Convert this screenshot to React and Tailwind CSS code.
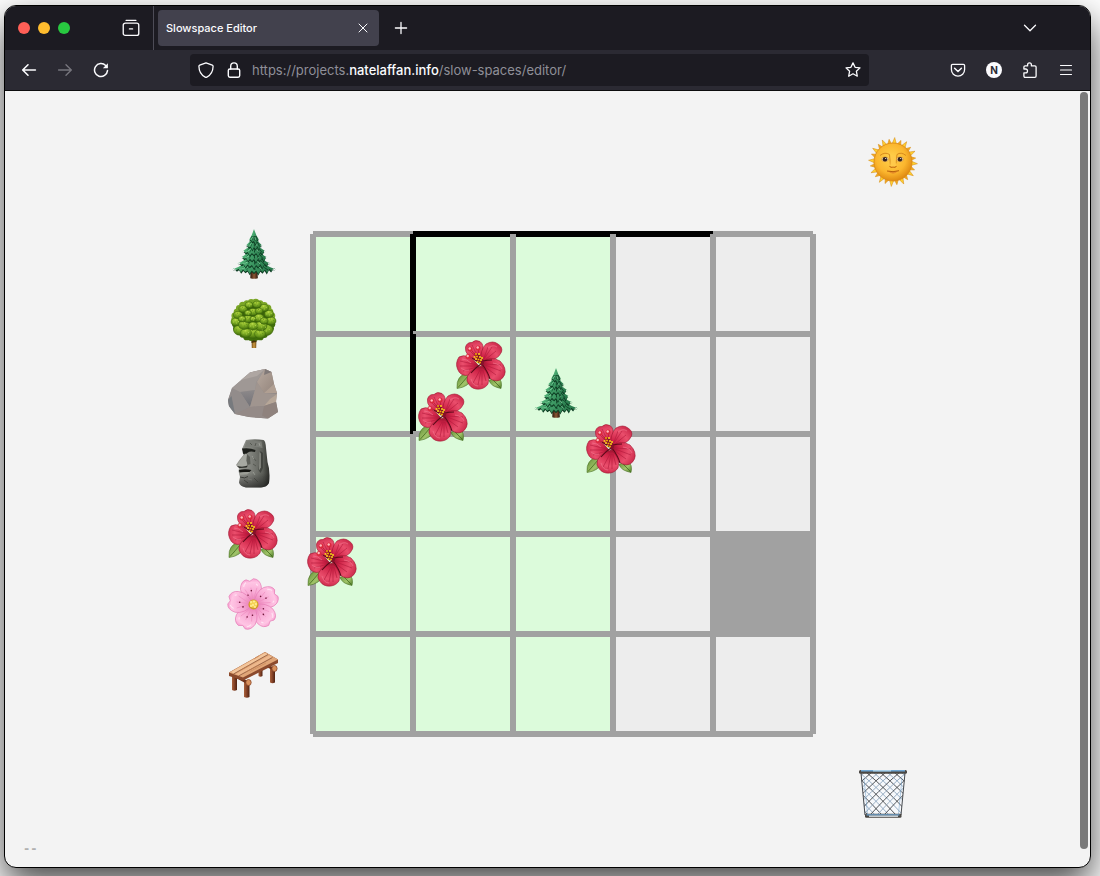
import React from "react";

/* ---------- browser icons ---------- */

function Icon({ size = 16, stroke = 1.4, children, className = "" }) {
  return (
    <svg
      width={size}
      height={size}
      viewBox="0 0 16 16"
      fill="none"
      stroke="currentColor"
      strokeWidth={stroke}
      strokeLinecap="round"
      strokeLinejoin="round"
      className={"shrink-0 " + className}
      aria-hidden="true"
    >
      {children}
    </svg>
  );
}

const FirefoxViewIcon = () => (
  <Icon size={18} stroke={1.2}>
    <path d="M3.6 1.200h8.800" />
    <path d="M3 3.600h10c1.100 0 1.900.8 1.900 1.800v7.400c0 1-.8 1.800-1.800 1.800H2.900c-1 0-1.800-.8-1.800-1.800V5.400c0-1 .8-1.800 1.900-1.800z" />
    <path d="M6.600 8.800h2.800" />
  </Icon>
);
const CloseIcon = () => (
  <Icon size={16} stroke={1}>
    <path d="M4 4l8 8M12 4l-8 8" />
  </Icon>
);
const PlusIcon = () => (
  <Icon size={16} stroke={1.3}>
    <path d="M8 2.4v11.2M2.4 8h11.2" />
  </Icon>
);
const ChevronIcon = () => (
  <Icon size={16} stroke={1.3}>
    <path d="M2.5 5.2 8 10.7l5.500-5.500" />
  </Icon>
);
const BackIcon = () => (
  <Icon stroke={1.6}>
    <path d="M14.400 8H1.800M7 2.800 1.700 8 7 13.200" />
  </Icon>
);
const ForwardIcon = () => (
  <Icon stroke={1.4}>
    <path d="M1.600 8h12.600M9 2.800 14.300 8 9 13.200" />
  </Icon>
);
const ReloadIcon = () => (
  <Icon stroke={1.5}>
    <path d="M14.500 8.600A6.500 6.500 0 1 1 12.700 3.500l1 1.100" />
    <path d="M14.900 1.300v5h-5z" fill="currentColor" stroke="none" />
  </Icon>
);
const ShieldIcon = () => (
  <Icon stroke={1.3}>
    <path d="M8 .800 1.700 3.100c-.500.200-.800.600-.800 1.100.100 5 2.300 8.800 6.300 10.900.500.300 1.100.300 1.600 0 4-2.100 6.200-5.900 6.300-10.900 0-.500-.300-.900-.800-1.100z" />
  </Icon>
);
const LockIcon = () => (
  <Icon stroke={1.4}>
    <rect x="2.300" y="7" width="11.400" height="8.200" rx="1.600" />
    <path d="M4.700 7V4.200a3.300 3.300 0 0 1 6.600 0V7" />
  </Icon>
);
const StarIcon = () => (
  <Icon stroke={1.3}>
    <path d="M8 .900 10.100 5.300l4.900.600-3.600 3.400.900 4.900L8 11.800l-4.300 2.400.9-4.900L1 5.900l4.900-.600z" />
  </Icon>
);
const PocketIcon = () => (
  <Icon stroke={1.3}>
    <path d="M2.600 2.300h10.800c.700 0 1.200.500 1.200 1.200V7.500a6.600 6.600 0 0 1-13.200 0V3.500c0-.700.500-1.200 1.200-1.200z" />
    <path d="M4.600 6.300 8 9.500l3.400-3.200" strokeWidth="1.500" />
  </Icon>
);
const PuzzleIcon = () => (
  <Icon stroke={1.300}>
    <path d="M5.600 3.900V2.700a1.900 1.900 0 0 1 3.800 0v1.200h3.500c.700 0 1.200.500 1.200 1.200v9c0 .700-.500 1.200-1.200 1.200H3.100c-.700 0-1.200-.500-1.200-1.200v-3.300h1.700a1.900 1.900 0 0 0 0-3.800H1.900V5.100c0-.700.500-1.200 1.200-1.200z" />
  </Icon>
);
const MenuIcon = () => (
  <Icon stroke={1.200}>
    <path d="M2.500 3.500h11M2.500 8h11M2.500 12.500h11" />
  </Icon>
);

/* ---------- garden objects, each on a 50 x 50 field ---------- */

function Glyph({ children }) {
  return (
    <svg width="50" height="50" viewBox="0 0 50 50" className="block overflow-visible" aria-hidden="true">
      {children}
    </svg>
  );
}

const pineTiers = [
  { top: 26, base: 40.500, half: 22, teeth: 10 },
  { top: 22, base: 35, half: 17, teeth: 8 },
  { top: 17, base: 29, half: 14, teeth: 7 },
  { top: 12, base: 23, half: 12.500, teeth: 6 },
  { top: 6, base: 17, half: 8.500, teeth: 5 },
  { top: 0, base: 11, half: 5, teeth: 3 },
];

function tierPath({ top, base, half, teeth }, dy, shrink) {
  const cx = 26;
  const h = half * shrink;
  const step = (2 * h) / teeth;
  let d = `M${cx} ${top + dy}Q${cx - h * 0.35} ${base - 5 + dy} ${cx - h} ${base + dy}`;
  for (let i = 0; i < teeth; i++) {
    const x = cx - h + i * step;
    const sag = 3 * Math.sin(((i + 0.5) / teeth) * Math.PI);
    const tip = i === teeth - 1 ? 0 : sag + (i % 2 ? 1.5 : 0.2);
    d += `L${x + step * 0.5} ${base - 2 + sag + dy}L${x + step} ${base + tip + dy}`;
  }
  return d + `Q${cx + h * 0.35} ${base - 5 + dy} ${cx} ${top + dy}Z`;
}

function Pine() {
  return (
    <Glyph>
      <defs>
        <linearGradient id="pineLeaf" x1="0" y1="0" x2="1" y2="0.6">
          <stop offset="0" stopColor="#6ccb8e" />
          <stop offset="0.5" stopColor="#46a56d" />
          <stop offset="1" stopColor="#27784a" />
        </linearGradient>
        <linearGradient id="pineTrunk">
          <stop offset="0" stopColor="#2c170c" />
          <stop offset="0.5" stopColor="#8d5836" />
          <stop offset="1" stopColor="#2c170c" />
        </linearGradient>
      </defs>
      <path d="M22.500 41h7l.3 8.200q-3.700 1-7.500 0z" fill="url(#pineTrunk)" />
      {pineTiers.map((t, i) => (
        <g key={i}>
          <path d={tierPath(t, 1.500, 0.97)} fill="#0d3b22" />
          <path d={tierPath(t, 0, 1)} fill="url(#pineLeaf)" />
          {[-0.75, -0.4, 0.05, 0.4, 0.75].map((k) => (
            <path
              key={k}
              d={`M${26 + k * t.half * 0.5} ${t.base - 4}q${k * 2} 2 ${k * t.half * 0.35} 4.500`}
              stroke={k > 0 ? "#11472a" : "#1d6a40"}
              strokeWidth="1"
              fill="none"
            />
          ))}
          <path
            d={`M${26 - t.half * 0.25} ${t.base - 3}l${-t.half * 0.4} 3M${26 + t.half * 0.2} ${t.base - 3}l${t.half * 0.15} 3`}
            stroke="#8be0a8"
            strokeWidth="0.7"
          />
        </g>
      ))}
    </Glyph>
  );
}

const treeRim = Array.from({ length: 26 }, (_, i) => {
  const a = (i / 26) * Math.PI * 2;
  return [25.5 + 19 * Math.cos(a), 21 + 17.800 * Math.sin(a), 3 + (i % 3) * 0.3];
});
const treeClumps = [
  [12, 31, 6.500], [38, 31, 7], [25, 34, 6.500], [18, 34, 5.500], [32, 35, 5.500],
  [8, 23, 5], [43, 22, 5], [33, 27, 6], [16, 26, 5.500], [25, 27, 5],
  [10, 16, 4.500], [41, 15, 4.500], [20, 20, 4.500], [31, 19, 5], [36, 22, 4], [14, 20, 3.800],
  [15, 10, 4.200], [36, 9, 4.500], [25, 13, 4.500], [20, 14, 3.500], [31, 12, 3.800],
  [21, 6, 4], [29, 5.500, 4.200], [25, 20, 3.200],
];

function RoundTree() {
  return (
    <Glyph>
      <defs>
        <radialGradient id="clump" cx="0.45" cy="0.2" r="0.85">
          <stop offset="0" stopColor="#b3d63f" />
          <stop offset="0.5" stopColor="#79a822" />
          <stop offset="1" stopColor="#3a6508" />
        </radialGradient>
        <linearGradient id="roundTrunk">
          <stop offset="0" stopColor="#6e4a14" />
          <stop offset="0.5" stopColor="#cf9b45" />
          <stop offset="1" stopColor="#6e4a14" />
        </linearGradient>
      </defs>
      <path d="M23.500 38h5l-.3 11h-4.400z" fill="url(#roundTrunk)" />
      <path d="M23.500 40h5v3l-5 1z" fill="#443208" />
      <ellipse cx="25.500" cy="21.500" rx="20" ry="18.500" fill="#3a6209" />
      {treeRim.map(([x, y, r], i) => (
        <circle key={i} cx={x} cy={y} r={r} fill={y > 24 ? "#416e0c" : "#7aa526"} />
      ))}
      {treeClumps.map(([x, y, r], i) => (
        <ellipse key={i} cx={x} cy={y} rx={r} ry={r * 0.8} fill="url(#clump)" stroke="#3b650a" strokeWidth="0.500" />
      ))}
      {treeClumps.map(([x, y, r], i) => (
        <path
          key={i}
          d={`M${x - r * 0.6} ${y}h.9M${x - 1} ${y - r * 0.4}h1M${x + r * 0.4} ${y - 0.5}h.9M${x} ${y + 1}h.8`}
          stroke={i % 2 ? "#c5e060" : "#57841a"}
          strokeWidth="0.7"
        />
      ))}
    </Glyph>
  );
}

function Rock() {
  return (
    <Glyph>
      <defs>
        <linearGradient id="rockBase" x1="0" y1="0" x2="0.6" y2="1">
          <stop offset="0" stopColor="#a7a09d" />
          <stop offset="1" stopColor="#8b8380" />
        </linearGradient>
        <linearGradient id="rockRight" x1="0" y1="0" x2="1" y2="1">
          <stop offset="0" stopColor="#b8aaa0" />
          <stop offset="1" stopColor="#94857c" />
        </linearGradient>
        <linearGradient id="rockDark" x1="0" y1="0" x2="0" y2="1">
          <stop offset="0" stopColor="#8d898a" />
          <stop offset="1" stopColor="#717177" />
        </linearGradient>
      </defs>
      <path d="M0 31 4 19 22 3.500 37 0l6.500 3 2.500 12 3 9-1 8 2 11-10 6.500-19-1.500-14-3L1 37z" fill="url(#rockBase)" />
      <path d="M22 3.500 37 0l-9 13-1 8-15 2-8-4z" fill="#9f9895" />
      <path d="M22 3.500 37 0l-8 7-16 4z" fill="#aea6a2" />
      <path d="M37 0l6.500 3L46 15l-10 9-7-11z" fill="url(#rockRight)" />
      <path d="M37 0l6.500 3-7.500 3z" fill="#807978" />
      <path d="M12 23l15-2-5 17z" fill="url(#rockDark)" />
      <path d="M27 21l2-8 7 11 13 1-7 6-6 6-14 1z" fill="#a0958f" />
      <path d="M36 24l10-9 3 9z" fill="#b09f92" />
      <path d="M49 25l-1 8-12 4 6-7z" fill="#b7a798" />
      <path d="M36 37l12-4 2 10-10 6.500-6-3z" fill="#8f827d" />
      <path d="M22 38l14-1-2 9.500 6 3L21 48l-14-3z" fill="#948a87" />
      <path d="M0 31 4 19l8 4 10 15-15 7-6-8z" fill="#928c8b" />
      <path d="M0 31l3.500-4L7 45l-6-8z" fill="#777a7e" />
    </Glyph>
  );
}

const moaiOutline =
  "M18 1q9-1.500 17.500 0 2 .5 2.500 8l1.500 14q3 9 1.500 21-2 4-8 4.500H18q-6-1-7-5l1-5.500-1-4-.5-2 .5-2.500-3-3.500q3-5 7.500-10l.5-2.500-2-3.500z";

function Moai() {
  return (
    <Glyph>
      <defs>
        <linearGradient id="moai">
          <stop offset="0" stopColor="#9b9c96" />
          <stop offset="0.450" stopColor="#7f817b" />
          <stop offset="0.8" stopColor="#5b5d57" />
          <stop offset="1" stopColor="#2d2e2a" />
        </linearGradient>
        <linearGradient id="moaiShade" x1="0" y1="0" x2="0" y2="1">
          <stop offset="0.700" stopColor="#111" stopOpacity="0" />
          <stop offset="1" stopColor="#111" stopOpacity="0.6" />
        </linearGradient>
      </defs>
      <path d={moaiOutline} fill="url(#moai)" />
      <path d="M14 9.500q8-1 13.500 1.500l-.5 2q-5-1-7 .5l-3.500 2.500-1.500-1.500z" fill="#1d1f1b" />
      <path d="M17 14.500l2 1-.5 6 1 4.500q-3 2.500-10.500.5 3-5 8-12z" fill="#a6a8a1" />
      <path d="M19 15l3 3 .5 7-3 1-1-4.500z" fill="#5c5e58" />
      <path d="M9 27q6 1.500 11-.5l-1.500 2-7 .5z" fill="#282a26" />
      <path d="M11 31q6-1.500 12.500 0l-2 2-10 .5z" fill="#141512" />
      <path d="M11 34q6-1.500 11-1l-3 2.500-7 .5z" fill="#9fa19a" />
      <path d="M12 38q5 2 8-.5" stroke="#464843" fill="none" />
      <path d="M32.500 12l2.500 2v15l-2.500 5-2-3z" fill="#42443f" />
      <path d="M31.500 13l1.300 1.500v14l-1.800 3z" fill="#8c8e87" />
      <path d="M18.500 2.500q8-1 15 0l1 6.500q-9-2-18-.5z" fill="#7b7d77" />
      <path d="M22 4l2 2M28 4l-1 3M25 18l3 4M25 25l3 2M16 41l4 3M26 39l4 4M35 37l2 5" stroke="#54564f" strokeWidth="0.900" />
      <path d="M24 17l2 3M25 33l2 3M20 40l4 1M31 4l1 3" stroke="#a1a39c" strokeWidth="0.800" />
      <path d={moaiOutline} fill="url(#moaiShade)" />
    </Glyph>
  );
}

const pistil = [
  [20, 14], [23, 14], [18.500, 17], [21, 16.500], [24, 17], [20, 19], [22.500, 19.500], [25, 20],
  [21.500, 22], [24, 22.500], [26, 18],
];

function Hibiscus() {
  return (
    <Glyph>
      <defs>
        <radialGradient id="hibPetal" gradientUnits="userSpaceOnUse" cx="25" cy="24" r="26">
          <stop offset="0" stopColor="#8c0c28" />
          <stop offset="0.3" stopColor="#cf2347" />
          <stop offset="0.7" stopColor="#ea4e6c" />
          <stop offset="1" stopColor="#cc2a4b" />
        </radialGradient>
        <linearGradient id="hibLeaf" x1="0" y1="0" x2="1" y2="1">
          <stop offset="0" stopColor="#5d8c31" />
          <stop offset="0.6" stopColor="#a1c46a" />
          <stop offset="1" stopColor="#4c7a25" />
        </linearGradient>
      </defs>
      <path d="M1 48.500Q0 35 12 33l4 5q-3 9-15 10.500z" fill="url(#hibLeaf)" stroke="#476f22" strokeWidth="0.600" />
      <path d="M2 47.500Q7 42 12 36" stroke="#42691e" strokeWidth="0.800" fill="none" />
      <path d="M45 48.500q2-8-4-12l-8 4q2 6 12 8z" fill="url(#hibLeaf)" stroke="#476f22" strokeWidth="0.600" />
      <path d="M44.500 47.500 37 40" stroke="#42691e" strokeWidth="0.800" />
      <g fill="url(#hibPetal)" stroke="#a0142f" strokeWidth="0.600">
        <path d="M24 23Q8 16 9.500 7 11 2 16 2.500 19-1 24 1.500q4 3 3 9z" />
        <path d="M25 21Q24 10 30 4q7-4 12 0 5 3 3.500 8Q42 20 31 21z" />
        <path d="M23 26Q12 12 3 17-1 23 1.500 29q3 8 11.500 6z" />
        <path d="M25 23Q34 15 44 21q7 7 4.500 14-4 8-12 5Q27 36 25 23z" />
        <path d="M25 26Q10 31 11 41q3 7 9 8 8 1 12-5 3-10-7-18z" />
      </g>
      <g stroke="#b0193a" strokeWidth="0.600" fill="none">
        <path d="M21 25 4 21M21 26 4 26M21 27 7 31M28 19 36 7M29 20l11-9M28 18l4-11M29 24l16 1M29 25l16 6M29 27l11 8M24 30l-7 13M25 30l-3 15M26 30v15M27 30l3 11M19 16l-6-6M20 13 16 5" />
      </g>
      <g stroke="#f27991" strokeWidth="0.600" fill="none">
        <path d="M6 19q5 0 9 4M32 8q5-4 9-1M37 23q7 1 9 6M15 39q2 7 7 7M5 28q4 4 8 2" />
      </g>
      <path d="M25 24Q20 27 15 33M26 24q6 8 8 15M27 21q4-1 9-1M23 23q-4-4-7-5" stroke="#5c0a1a" strokeWidth="1.100" fill="none" />
      <path d="M26 26Q20 20 18 13l5 1q4 5 5 9z" fill="#84102a" />
      <path d="M20 16 14.500 9M22.500 14V8.500M19 18l-6-1" stroke="#c21f3f" strokeWidth="1" />
      {pistil.map(([x, y], i) => (
        <rect key={i} x={x - 0.9} y={y - 0.8} width="1.800" height="1.600" fill={i % 3 ? "#ffe11a" : "#f4b400"} />
      ))}
      {[[14, 9], [22, 8], [12, 16.500]].map(([x, y]) => (
        <g key={x}>
          <circle cx={x} cy={y} r="2.500" fill="#d92a3d" />
          <circle cx={x - 0.3} cy={y - 0.5} r="1.200" fill="#ffb9bd" />
        </g>
      ))}
    </Glyph>
  );
}

function Blossom() {
  return (
    <Glyph>
      <defs>
        <radialGradient id="blossom" gradientUnits="userSpaceOnUse" cx="0" cy="0" r="26">
          <stop offset="0.1" stopColor="#e880b6" />
          <stop offset="0.450" stopColor="#f8a9d4" />
          <stop offset="0.850" stopColor="#ffc5e4" />
          <stop offset="1" stopColor="#f79fcf" />
        </radialGradient>
      </defs>
      {[-9, 63, 135, 207, 279].map((a) => (
        <g key={a} transform={`translate(25.500 25.500) rotate(${a})`}>
          <path d="M0 0Q-11-8-10.500-17-9-25-3.500-25.500L0-23.500 4-25.500Q10-24 10.500-17 11-8 0 0z" fill="url(#blossom)" stroke="#e77fb8" strokeWidth="0.700" />
          <path d="M0-4v-13M-1-5l-5-11M1-5l5-11" stroke="#ee8cc0" strokeWidth="0.600" />
          <path d="M-7-19q1-3 3-4M6-20l1 2" stroke="#ffe3f2" strokeWidth="1.200" fill="none" />
          <circle cx="0" cy="-14" r="0.800" fill="#6f1839" />
          <circle cx="-4" cy="-10" r="0.800" fill="#6f1839" />
        </g>
      ))}
      <circle cx="25.500" cy="25.500" r="5" fill="#cf9a28" />
      <circle cx="25.500" cy="25" r="3.800" fill="#f6d257" />
      {[[23, 23], [26, 22.500], [28, 25], [25, 26], [23, 27], [27, 28]].map(([x, y], i) => (
        <circle key={i} cx={x} cy={y} r="0.900" fill="#fff2a0" />
      ))}
    </Glyph>
  );
}

function Bench() {
  return (
    <Glyph>
      <defs>
        <linearGradient id="leg">
          <stop offset="0" stopColor="#a8623c" />
          <stop offset="0.4" stopColor="#8c472a" />
          <stop offset="1" stopColor="#4f2110" />
        </linearGradient>
      </defs>
      <path d="M30.500 16h4v11q-2 1.500-4 0z" fill="url(#leg)" />
      <path d="M4 27h5v14q-2.500 1.500-5 0z" fill="url(#leg)" />
      <path d="M42 18h5v15.500q-2.500 1.500-5 0z" fill="url(#leg)" />
      <path d="M16 32h5.500v16q-2.500 1.500-5.500 0z" fill="url(#leg)" />
      <path d="M8 26l12 6-1 3-11-6zM36 14l11 5v3l-11-5z" fill="#6d321b" />
      <path d="M1 23.500 37 3l13 7.500v3.500L15 31.500 1 27z" fill="#8b4a2d" />
      <path d="M1 23.500 37 3l13 7.500-35 18z" fill="#e0a678" />
      <path d="M3 23 37 4l3 1.500L6 24.500z" fill="#f3c69c" />
      <path d="M8 25 41 6.500l3 1.500-33 18.500z" fill="#edb88d" />
      <path d="M5.500 25 40 5.500M10.500 27l34-18.500" stroke="#8a563b" strokeWidth="0.800" />
      <path d="M13 21l8-4.500M18 23l12-6.500M22 22.500l16-8.500M26 10l5-3" stroke="#c88556" strokeWidth="0.600" />
      <ellipse cx="20.500" cy="33.500" rx="2.700" ry="3" fill="#d8905c" stroke="#8a4828" strokeWidth="0.800" />
      <ellipse cx="46.500" cy="19.500" rx="2.600" ry="3" fill="#d8905c" stroke="#8a4828" strokeWidth="0.800" />
    </Glyph>
  );
}

function Sun() {
  const rays = Array.from({ length: 24 }, (_, i) => i * 15);
  return (
    <Glyph>
      <defs>
        <radialGradient id="sunFace" cx="0.450" cy="0.400" r="0.600">
          <stop offset="0" stopColor="#ffd24e" />
          <stop offset="0.650" stopColor="#fbb62e" />
          <stop offset="1" stopColor="#e08a12" />
        </radialGradient>
      </defs>
      {rays.map((a, i) => (
        <path
          key={a}
          transform={`rotate(${a + 4} 25 25)`}
          d={i % 2 ? "M23 7 25.500 2 27 7z" : "M22.800 7 25 .5 27.200 7z"}
          fill={i % 2 ? "#f2a91f" : "#ffd02f"}
          stroke="#d58b17"
          strokeWidth="0.500"
        />
      ))}
      <circle cx="25" cy="25" r="19" fill="url(#sunFace)" stroke="#d98817" strokeWidth="0.800" />
      <path d="M12 18.500q5-4 9.500-1l1 11M38 18.500q-5-4-9-1l-1 9" stroke="#d88a1c" strokeWidth="1" fill="none" />
      <path d="M23.500 19l-1.500 10.500q3 2.500 6 0L27 19z" fill="#ffc94a" />
      <path d="M21.500 29q1.500 2 3.500 1 2 1 3.500-1" stroke="#c66f12" strokeWidth="1.100" fill="none" />
      {[17, 32].map((x) => (
        <g key={x}>
          <ellipse cx={x} cy="22.300" rx="3.400" ry="2.300" fill="#ffe7b5" stroke="#b36d14" strokeWidth="0.500" />
          <circle cx={x} cy="22.300" r="2.300" fill="#35211d" />
          <circle cx={x + 0.7} cy="21.500" r="0.600" fill="#fff" />
        </g>
      ))}
      <path d="M20 34q5 1.500 10 0-5 5.500-10 0z" fill="#e78d28" />
      <path d="M19 34q6 1.500 12-.3" stroke="#b8600d" strokeWidth="1" fill="none" />
    </Glyph>
  );
}

function Basket() {
  const lines = [];
  for (let i = -5; i < 8; i++) {
    lines.push(`M${i * 7} 3Q${i * 7 + 20} 20 ${i * 7 + 44} 46`);
    lines.push(`M${i * 7 + 20} 3Q${i * 7} 20 ${i * 7 - 24} 46`);
  }
  return (
    <Glyph>
      <defs>
        <clipPath id="basketBody">
          <path d="M2 4h44l-4 43H6z" />
        </clipPath>
      </defs>
      <path d="M2 4h44l-4 43H6z" fill="#f6f8fb" />
      <g clipPath="url(#basketBody)" fill="none">
        {lines.map((d, i) => (
          <path key={i} d={d} stroke={i % 4 < 2 ? "#3f4347" : "#8ca5bd"} strokeWidth="0.900" />
        ))}
      </g>
      <path d="M2 4 6 46M46 4l-4 42" stroke="#45494e" strokeWidth="1" />
      <path d="M5 9l3.500 36M43 9l-3.500 36" stroke="#6d9cc6" strokeWidth="0.500" />
      <rect x="0" y="1" width="48" height="3.800" rx="1.600" fill="#4b4844" />
      <path d="M2 1.800h44" stroke="#6fa6d3" strokeWidth="1.600" />
      <path d="M14 1.800h18" stroke="#b8dcf2" strokeWidth="1.200" />
      <rect x="6" y="44.800" width="36.500" height="4" rx="1.300" fill="#494642" />
      <path d="M7.500 45.800h33" stroke="#6fa6d3" strokeWidth="1.300" />
      <path d="M10 47.200h29" stroke="#e6eff5" strokeWidth="1.200" />
    </Glyph>
  );
}

/* ---------- editor data ---------- */

const palette = [
  { name: "Evergreen tree", Art: Pine },
  { name: "Deciduous tree", Art: RoundTree },
  { name: "Rock", Art: Rock },
  { name: "Moai", Art: Moai },
  { name: "Hibiscus", Art: Hibiscus },
  { name: "Cherry blossom", Art: Blossom },
  { name: "Bench", Art: Bench },
];

const placed = [
  { name: "Hibiscus", Art: Hibiscus, x: 143, y: 106 },
  { name: "Hibiscus", Art: Hibiscus, x: 105, y: 158 },
  { name: "Evergreen tree", Art: Pine, x: 217, y: 134 },
  { name: "Hibiscus", Art: Hibiscus, x: 273, y: 190 },
  { name: "Hibiscus", Art: Hibiscus, x: -6, y: 303 },
];

const SIZE = 5;
const cells = Array.from({ length: SIZE * SIZE }, (_, i) => {
  const row = Math.floor(i / SIZE);
  const col = i % SIZE;
  const kind = row === 3 && col === 4 ? "block" : col < 3 ? "grass" : "empty";
  return { row, col, kind };
});

const cellFill = {
  grass: "bg-[#dcfbdb]",
  empty: "bg-[#ededed]",
  block: "bg-[#a1a1a1]",
};

const topWall = (row, col) => row === 0 && col >= 1 && col <= 3;
const leftWall = (row, col) => col === 1 && row <= 1;

function Board() {
  const line = "#a1a1a1";
  return (
    <div className="relative mt-[97px] h-[500px] w-[500px] shrink-0">
      <div className="grid h-full grid-cols-5 grid-rows-5">
        {cells.map(({ row, col, kind }) => (
          <button key={`${row}-${col}`} type="button" aria-label={`Cell ${row + 1}, ${col + 1}`} className={cellFill[kind]} />
        ))}
      </div>
      <svg
        className="pointer-events-none absolute inset-0 overflow-visible"
        width="500"
        height="500"
        viewBox="0 0 500 500"
        strokeWidth="6"
        aria-hidden="true"
      >
        {cells.map(({ row, col }) => {
          const x = col * 100;
          const y = row * 100;
          return (
            <g key={`${row}-${col}`}>
              {row === 0 && <path d={`M${x} ${y}h100`} stroke={topWall(row, col) ? "#000" : line} />}
              <path d={`M${x} ${y}v100`} stroke={leftWall(row, col) ? "#000" : line} />
              <path d={`M${x} ${y + 100}h100`} stroke={line} />
              {col === SIZE - 1 && <path d={`M${x + 100} ${y}v100`} stroke={line} />}
            </g>
          );
        })}
      </svg>
      {placed.map(({ name, Art, x, y }, i) => (
        <button key={i} type="button" aria-label={`${name} on board`} className="absolute" style={{ left: x, top: y }}>
          <Art />
        </button>
      ))}
    </div>
  );
}

function ToolButton({ label, children, className = "text-[#fbfbfe]" }) {
  return (
    <button type="button" aria-label={label} className={"flex h-8 w-9 shrink-0 items-center justify-center " + className}>
      {children}
    </button>
  );
}

function TabBar() {
  return (
    <header className="flex h-11 items-center bg-[#1c1b22] text-[#fbfbfe]">
      <div className="flex gap-2 pl-[13px]">
        <button type="button" aria-label="Close window" className="size-3 rounded-full bg-[#ff5f57]" />
        <button type="button" aria-label="Minimize window" className="size-3 rounded-full bg-[#febc2e]" />
        <button type="button" aria-label="Zoom window" className="size-3 rounded-full bg-[#28c840]" />
      </div>
      <div className="ml-[43px] mr-1 flex h-full items-center border-r border-[#4d4c57] pr-1">
        <ToolButton label="View recent browsing">
          <FirefoxViewIcon />
        </ToolButton>
      </div>
      <div className="flex h-9 w-[221px] items-center justify-between rounded bg-[#42414d] px-2">
        <span className="pt-px text-[11px] font-medium">Slowspace Editor</span>
        <button type="button" aria-label="Close tab">
          <CloseIcon />
        </button>
      </div>
      <div className="ml-1 flex-1">
        <ToolButton label="New tab">
          <PlusIcon />
        </ToolButton>
      </div>
      <div className="mr-[42px]">
        <ToolButton label="List all tabs">
          <ChevronIcon />
        </ToolButton>
      </div>
    </header>
  );
}

function NavBar() {
  return (
    <nav className="flex h-[41px] items-center border-b border-[#0c0c0d] bg-[#2b2a33] px-[6px] text-[#fbfbfe]">
      <ToolButton label="Back">
        <BackIcon />
      </ToolButton>
      <ToolButton label="Forward" className="text-[#76757d]">
        <ForwardIcon />
      </ToolButton>
      <ToolButton label="Reload">
        <ReloadIcon />
      </ToolButton>
      <div className="mx-[71px] flex h-8 min-w-0 flex-1 items-center rounded bg-[#1c1b22] px-2">
        <div className="flex gap-3">
          <ShieldIcon />
          <LockIcon />
        </div>
        <div className="relative ml-[10px] h-full min-w-0 flex-1 text-[13px]">
          <input
            aria-label="Address"
            defaultValue="https://projects.natelaffan.info/slow-spaces/editor/"
            className="h-full w-full bg-transparent pt-px text-transparent caret-white outline-none"
          />
          <div aria-hidden="true" className="pointer-events-none absolute inset-0 flex items-center whitespace-nowrap pt-px text-[#8f8f98]">
            https://projects.<span className="font-medium text-[#fbfbfe]">natelaffan.info</span>/slow-spaces/editor/
          </div>
        </div>
        <button type="button" aria-label="Bookmark this page">
          <StarIcon />
        </button>
      </div>
      <ToolButton label="Save to Pocket">
        <PocketIcon />
      </ToolButton>
      <ToolButton label="Account">
        <span className="flex size-4 items-center justify-center rounded-full bg-[#fbfbfe] text-[10px] font-bold text-[#2b2a33]">N</span>
      </ToolButton>
      <ToolButton label="Extensions">
        <PuzzleIcon />
      </ToolButton>
      <ToolButton label="Open menu">
        <MenuIcon />
      </ToolButton>
    </nav>
  );
}

export default function App() {
  return (
    <div className="flex min-h-screen overflow-hidden bg-white pb-2 pl-1 pr-[9px] pt-[5px] font-['Inter',sans-serif]">
      <div className="flex min-w-0 flex-1 flex-col overflow-hidden rounded-xl border border-black bg-[#f3f3f3] shadow-[0_16px_36px_rgba(0,0,0,0.72)]">
        <TabBar />
        <NavBar />
        <div className="flex flex-1">
          <div className="flex min-w-0 flex-1 flex-col">
            <main className="flex flex-1 justify-center pl-[60px] pt-[46px]">
              <div className="mr-[35px] mt-[92px] flex flex-col gap-5">
                {palette.map(({ name, Art }) => (
                  <button key={name} type="button" aria-label={name} className="size-[50px]">
                    <Art />
                  </button>
                ))}
              </div>
              <Board />
              <div className="ml-[46px] flex w-[59px] flex-col justify-between">
                <button type="button" aria-label="Sun" className="size-[50px] self-end">
                  <Sun />
                </button>
                <button type="button" aria-label="Trash" className="size-[50px]">
                  <Basket />
                </button>
              </div>
            </main>
            <footer className="flex h-12 items-end pb-[10px] pl-[18px] font-['DejaVu_Sans_Mono',monospace] text-xs font-bold text-[#b0b0b0]">
              --
            </footer>
          </div>
          <div className="flex w-[10px] flex-col pb-[18px] pr-[2px] pt-px">
            <div className="flex-1 rounded-full bg-[#7a7a7a]" />
          </div>
        </div>
      </div>
    </div>
  );
}
